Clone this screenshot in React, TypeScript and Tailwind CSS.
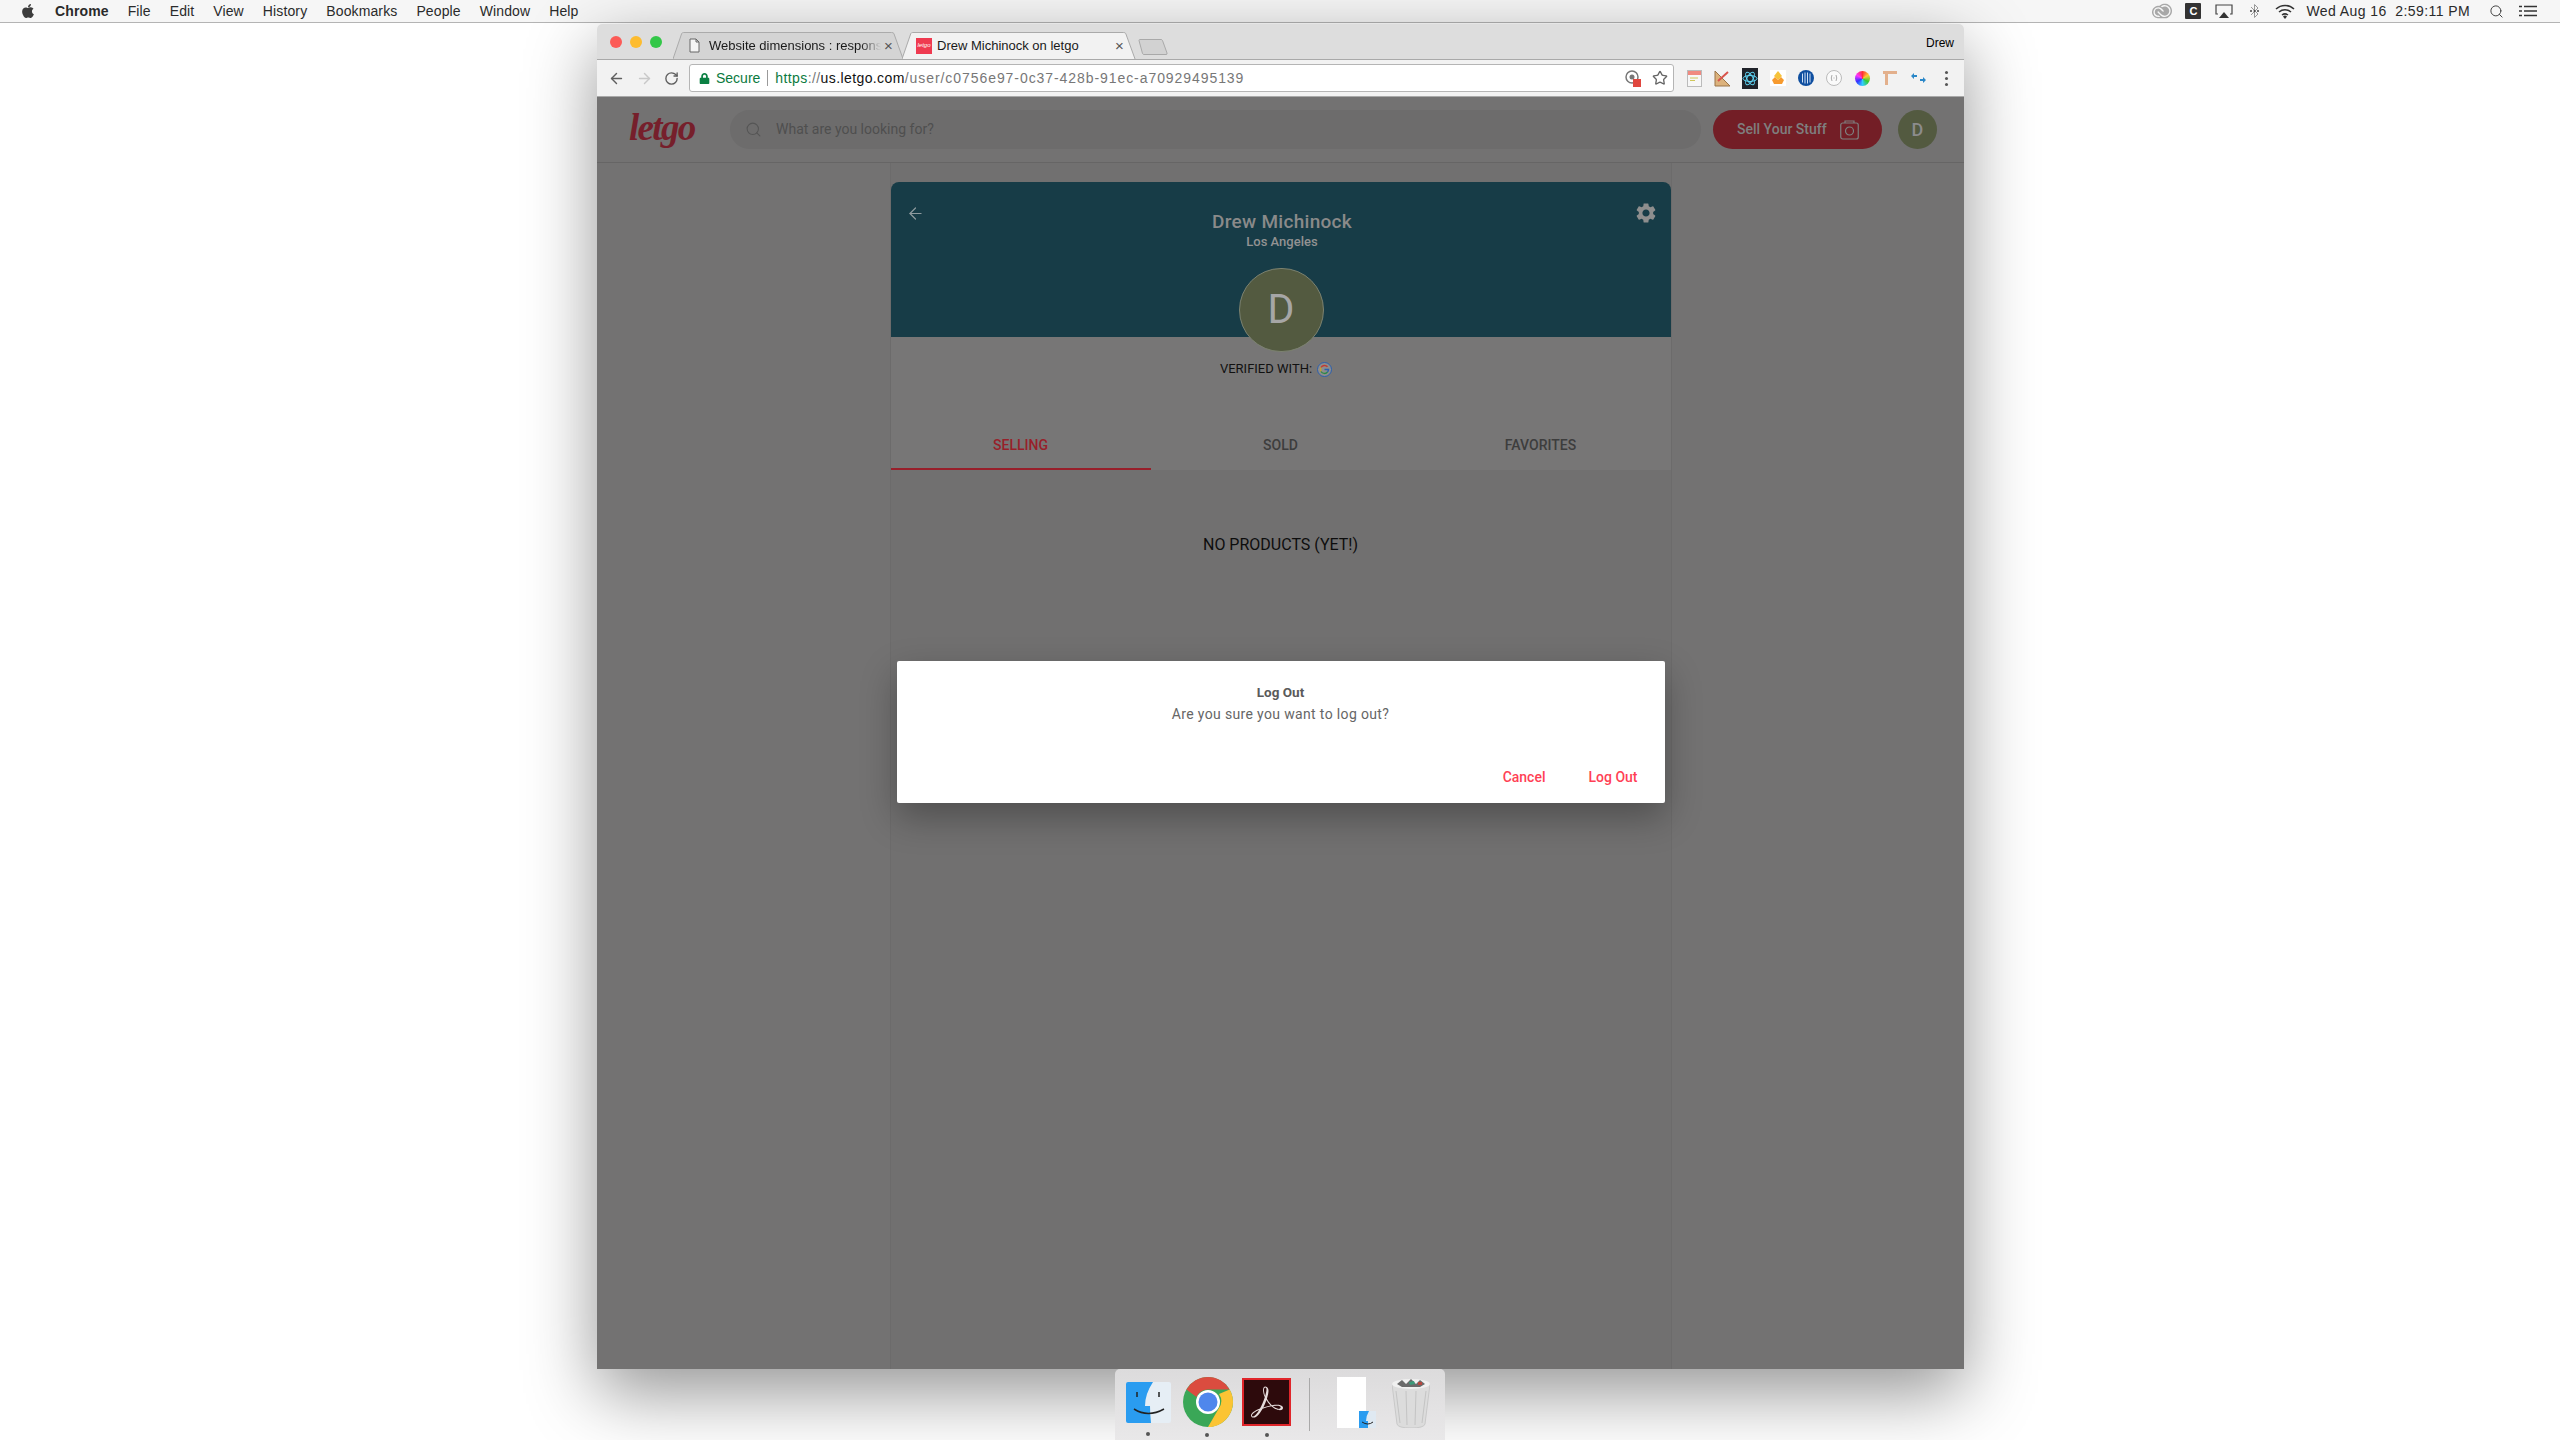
import { ArrowLeft, ArrowRight, RotateCw, Search, Star } from "lucide-react";
import { FaApple, FaLock } from "react-icons/fa";
import { MdSettings } from "react-icons/md";
import { SiAdobecreativecloud, SiAdobeacrobatreader } from "react-icons/si";

const menuItems = ["File", "Edit", "View", "History", "Bookmarks", "People", "Window", "Help"];

function MenuBar() {
  return (
    <div className="flex h-[23px] items-center justify-between bg-[#f6f6f6] border-b border-[#b4b4b4] pl-[20px] pr-[23px] font-['Liberation_Sans',sans-serif] text-[14px] text-[#2a2a2a]">
      <div className="flex items-center gap-[19px] tracking-[0.12px]">
        <FaApple className="size-[16px] text-[#3c3c3c]" />
        <span className="font-bold">Chrome</span>
        {menuItems.map((m) => (
          <span key={m}>{m}</span>
        ))}
      </div>
      <div className="flex items-center">
        <SiAdobecreativecloud className="size-[20px] text-[#a8a8a8]" />
        <div className="ml-[13px] flex size-[16px] items-center justify-center rounded-[1px] bg-[#333] text-[11px] font-bold text-white">C</div>
        <svg className="ml-[14px]" width="18" height="15" viewBox="0 0 18 15">
          <path d="M3 10H1V1h16v9h-2" fill="none" stroke="#444" strokeWidth="1.2" />
          <path d="M9 8l5 6H4z" fill="#333" />
        </svg>
        <svg className="ml-[16px]" width="11" height="16" viewBox="0 0 11 16">
          <path d="M2 4l7 7-3.5 3.5v-13L9 5 2 12" fill="none" stroke="#999" strokeWidth="1" />
          <circle cx="2" cy="8" r="1" fill="#444" />
          <circle cx="5.5" cy="8" r="1" fill="#444" />
          <circle cx="9" cy="8" r="1" fill="#444" />
        </svg>
        <svg className="ml-[15px]" width="20" height="15" viewBox="0 0 20 15">
          <path d="M1 5a13 13 0 0 1 18 0M4 8a9 9 0 0 1 12 0M7 11a5 5 0 0 1 6 0" fill="none" stroke="#333" strokeWidth="1.5" />
          <path d="M10 15l-2-2.500a3 3 0 0 1 4 0z" fill="#333" />
        </svg>
        <span className="ml-[11px] tracking-[0.42px] whitespace-pre">Wed Aug 16  2:59:11 PM</span>
        <Search className="ml-[19px] size-[15px] text-[#444]" strokeWidth={1.6} />
        <svg className="ml-[15px]" width="18" height="12" viewBox="0 0 18 12">
          <path d="M5 1.500h13M5 6h13M5 10.500h13" stroke="#333" strokeWidth="1.500" />
          <path d="M0 1.500h3M0 6h3M0 10.500h3" stroke="#333" strokeWidth="1.500" />
        </svg>
      </div>
    </div>
  );
}

function TabShape({ fill, stroke }: { fill: string; stroke: string }) {
  return (
    <svg className="absolute inset-0 h-full w-full" viewBox="0 0 240 27" preserveAspectRatio="none">
      <path d="M0 27L9 1.500Q9.500 0.500 11 0.500H226Q228 0.500 228.500 1.500L238 27" fill={fill} stroke={stroke} strokeWidth="1" />
    </svg>
  );
}

function TabStrip() {
  return (
    <div className="flex h-[36px] items-end bg-[#dddddd] border-b border-[#a9a9a9] pl-[13px] pr-[10px] font-['Liberation_Sans',sans-serif] text-[13px] text-[#1a1a1a]">
      <div className="mb-[11px] flex gap-[8px] self-end">
        <span className="size-[12px] rounded-full bg-[#fc5b57]" />
        <span className="size-[12px] rounded-full bg-[#fdbc2f]" />
        <span className="size-[12px] rounded-full bg-[#33c748]" />
      </div>
      <div className="relative ml-[11px] flex h-[27px] w-[232px] items-center pl-[16px]">
        <TabShape fill="#d4d4d4" stroke="#a9a9a9" />
        <svg className="relative" width="11" height="15" viewBox="0 0 11 15">
          <path d="M1 1h6l3 3v10H1zM7 1v3h3" fill="#f4f4f4" stroke="#666" strokeWidth="1" />
        </svg>
        <span className="relative ml-[9px] w-[172px] overflow-hidden whitespace-nowrap [mask-image:linear-gradient(to_right,black_88%,transparent)]">Website dimensions : responsive</span>
        <span className="relative ml-[3px] text-[15px] leading-none text-[#555]">×</span>
      </div>
      <div className="relative -ml-[3px] flex h-[27px] w-[235px] items-center pl-[14px]">
        <TabShape fill="#f2f2f2" stroke="#a9a9a9" />
        <span className="relative flex size-[16px] items-center justify-center bg-[#ef3a50] text-[6px] italic text-white">letgo</span>
        <span className="relative ml-[5px] w-[178px] whitespace-nowrap">Drew Michinock on letgo</span>
        <span className="relative text-[15px] leading-none text-[#555]">×</span>
      </div>
      <svg className="mb-[4px] ml-[1px]" width="30" height="16" viewBox="0 0 30 16">
        <path d="M1 1.500Q1 0.500 2 0.500H23Q24 0.500 24.500 1.500L29 14Q29.500 15.500 28 15.500H6Q5 15.500 4.500 14.500z" fill="#d2d2d2" stroke="#a9a9a9" />
      </svg>
      <span className="mb-[7px] ml-auto self-end text-[12px] text-black">Drew</span>
    </div>
  );
}

function ExtIcons() {
  return (
    <div className="ml-[6px] flex items-center">
      <span className="flex w-[28px] justify-center">
        <svg width="15" height="17" viewBox="0 0 15 17">
          <rect x="0.500" y="0.500" width="14" height="16" fill="#f7f7f7" stroke="#bbb" />
          <rect x="1" y="1" width="13" height="4" fill="#f08a80" />
          <path d="M3 8h8M3 10.500h5" stroke="#d0c75a" strokeWidth="1.200" />
        </svg>
      </span>
      <span className="flex w-[28px] justify-center">
        <svg width="17" height="17" viewBox="0 0 17 17">
          <path d="M1 1l0 15h15z" fill="#dcb27c" stroke="#9a7548" />
          <path d="M4 11l10-9" stroke="#d8534c" strokeWidth="2" />
        </svg>
      </span>
      <span className="flex w-[28px] justify-center">
        <svg width="16" height="21" viewBox="0 0 16 21">
          <rect width="16" height="21" fill="#20232a" />
          <g fill="none" stroke="#61dafb" strokeWidth="1">
            <ellipse cx="8" cy="10.500" rx="7" ry="3" />
            <ellipse cx="8" cy="10.500" rx="7" ry="3" transform="rotate(60 8 10.500)" />
            <ellipse cx="8" cy="10.500" rx="7" ry="3" transform="rotate(120 8 10.500)" />
          </g>
        </svg>
      </span>
      <span className="flex w-[28px] justify-center">
        <svg width="16" height="16" viewBox="0 0 16 16">
          <rect width="16" height="16" fill="#fff" />
          <path d="M8 1l4 5-4 4-4-4z" fill="#f6c33c" />
          <path d="M2 10l3-3 3 3 3-3 3 3-2 4H4z" fill="#f79a2e" />
        </svg>
      </span>
      <span className="flex w-[28px] justify-center">
        <svg width="16" height="16" viewBox="0 0 16 16">
          <circle cx="8" cy="8" r="8" fill="#0f4fa0" />
          <path d="M4.500 3.500v9M7 2.500v11M9.500 2.500v11M12 3.500v9" stroke="#cfe0f5" strokeWidth="1" />
        </svg>
      </span>
      <span className="flex w-[28px] justify-center">
        <svg width="16" height="16" viewBox="0 0 16 16">
          <circle cx="8" cy="8" r="7.500" fill="#fafafa" stroke="#bbb" />
          <path d="M6 5Q4.500 8 6 11M10 5q1.500 3 0 6M7.500 8h1" fill="none" stroke="#aaa" />
        </svg>
      </span>
      <span className="flex w-[28px] justify-center">
        <span className="size-[15px] rounded-full bg-[conic-gradient(#f33,#fc3,#3c3,#3cf,#33f,#f3f,#f33)]" />
      </span>
      <span className="flex w-[28px] justify-center">
        <svg width="16" height="16" viewBox="0 0 16 16">
          <path d="M1 1h14v3H6v11H3V4H1z" fill="#e3b08c" />
        </svg>
      </span>
      <span className="flex w-[28px] justify-center">
        <svg width="15" height="10" viewBox="0 0 15 10">
          <path d="M0 3l3-3v2h3v2H3v2zM15 7l-3-3v2H9v2h3v2z" fill="#2a87c8" />
        </svg>
      </span>
      <span className="ml-[9px] flex w-[10px] flex-col items-center gap-[3px]">
        <span className="size-[3px] rounded-full bg-[#555]" />
        <span className="size-[3px] rounded-full bg-[#555]" />
        <span className="size-[3px] rounded-full bg-[#555]" />
      </span>
    </div>
  );
}

function Toolbar() {
  return (
    <div className="flex h-[37px] items-center bg-[#f2f2f2] border-b border-[#a9a9a9] pl-[11px] font-['Liberation_Sans',sans-serif]">
      <ArrowLeft className="size-[17px] text-[#5f5f5f]" strokeWidth={2} />
      <ArrowRight className="ml-[11px] size-[17px] text-[#c8c8c8]" strokeWidth={2} />
      <RotateCw className="ml-[11px] size-[15px] text-[#5f5f5f]" strokeWidth={2.200} />
      <div className="ml-[10px] flex h-[28px] w-[985px] items-center rounded-[3px] border border-[#b5b5b5] bg-white pl-[9px] pr-[5px] text-[14px]">
        <FaLock className="size-[11px] text-[#0b8043]" />
        <span className="ml-[6px] text-[#0b7a3e]">Secure</span>
        <span className="ml-[7px] h-[16px] w-px bg-[#9a9a9a]" />
        <span className="ml-[7px] whitespace-nowrap">
          <span className="tracking-[0.4px] text-[#0b7a3e]">https</span>
          <span className="tracking-[0.4px] text-[#777]">://</span>
          <span className="tracking-[0.4px] text-[#111]">us.letgo.com</span>
          <span className="tracking-[0.93px] text-[#777]">/user/c0756e97-0c37-428b-91ec-a70929495139</span>
        </span>
        <svg className="ml-auto" width="16" height="18" viewBox="0 0 16 18">
          <circle cx="7" cy="8" r="6" fill="none" stroke="#777" strokeWidth="1.500" />
          <circle cx="7" cy="8" r="2.500" fill="#777" />
          <rect x="8" y="10" width="8" height="8" fill="#e0473f" />
        </svg>
        <Star className="ml-[11px] size-[16px] text-[#666]" strokeWidth={2} />
      </div>
      <ExtIcons />
    </div>
  );
}

function SiteHeader() {
  return (
    <div className="flex h-[66px] items-center border-b border-[#666565] bg-[#737272] pl-[32px] pr-[26px]">
      <span className="-mt-[4px] w-[64px] font-['Liberation_Serif',serif] text-[37px] leading-none font-bold italic tracking-[-1.700px] text-[#761f2b]">letgo</span>
      <div className="ml-[37px] flex h-[39px] w-[971px] items-center rounded-full bg-[#6d6c6c] pl-[15px] text-[14px] text-[#4f4f4f]">
        <Search className="size-[17px] text-[#555]" strokeWidth={1.500} />
        <span className="ml-[14px]">What are you looking for?</span>
      </div>
      <div className="ml-[12px] flex h-[39px] w-[169px] items-center rounded-full bg-[#731e26] pl-[24px] text-[14px] font-medium text-[#7f7f7f]">
        <span>Sell Your Stuff</span>
        <svg className="ml-[13px]" width="19" height="20" viewBox="0 0 19 20">
          <rect x="0.750" y="3" width="17.500" height="16" rx="2" fill="none" stroke="#7f7f7f" strokeWidth="1.200" />
          <circle cx="9.500" cy="11" r="4" fill="none" stroke="#7f7f7f" strokeWidth="1.200" />
          <path d="M5 3V1h9v2" fill="none" stroke="#7f7f7f" strokeWidth="1.200" />
        </svg>
      </div>
      <div className="ml-[16px] flex size-[39px] items-center justify-center rounded-full bg-[#535a40] text-[18px] font-medium text-[#8c8c8c]">D</div>
    </div>
  );
}

function GoogleIcon() {
  return (
    <svg width="15" height="15" viewBox="0 0 15 15">
      <circle cx="7.500" cy="7.500" r="7" fill="#8d8d8d" stroke="#2b5fae" strokeWidth="1" />
      <path d="M10.500 4.800A4 4 0 0 0 4 5.500" fill="none" stroke="#c23a30" strokeWidth="1.400" />
      <path d="M4 5.500a4 4 0 0 0 0 4" fill="none" stroke="#c9a028" strokeWidth="1.400" />
      <path d="M4 9.500a4 4 0 0 0 6.500.5" fill="none" stroke="#2a8a45" strokeWidth="1.400" />
      <path d="M7.500 7.500h4a4 4 0 0 1-1 2.500" fill="none" stroke="#2b5fae" strokeWidth="1.400" />
    </svg>
  );
}

function ProfileCard() {
  return (
    <div className="mt-[19px] w-[780px]">
      <div className="relative flex h-[155px] justify-between rounded-t-[8px] bg-[#173c47] pl-[15px] pr-[12px] pt-[22px]">
        <span className="w-[24px]">
          <ArrowLeft className="size-[19px] text-[#8e9a9e]" strokeWidth={1.500} />
        </span>
        <div className="flex flex-col items-center pt-[7px]">
          <span className="text-[19px] leading-[22px] font-medium tracking-[0.300px] text-[#8a8a8a]">Drew Michinock</span>
          <span className="text-[13px] leading-[18px] font-medium text-[#929292]">Los Angeles</span>
        </div>
        <MdSettings className="-mt-[3px] size-[24px] text-[#8e8e8e]" />
        <div className="absolute left-[348px] top-[86px] flex h-[84px] w-[85px] items-center justify-center rounded-full border border-[#7c8270] bg-[#535a40] text-[41px] font-normal text-[#a6a6a6]">D</div>
      </div>
      <div className="flex h-[133px] flex-col bg-[#777676]">
        <div className="mt-[24px] flex items-center justify-center gap-[5px] pr-[9px] text-[13px] leading-[16px] font-normal text-[#111]">
          <span>VERIFIED WITH:</span>
          <GoogleIcon />
        </div>
        <div className="mt-auto grid grid-cols-3 text-center text-[14px] font-medium">
          <div className="border-b-[2px] border-[#981f2a] pb-[14px] leading-[18px] text-[#981f2a]">SELLING</div>
          <div className="pb-[16px] leading-[18px] text-[#3d3d3d]">SOLD</div>
          <div className="pb-[16px] leading-[18px] text-[#3d3d3d]">FAVORITES</div>
        </div>
      </div>
      <div className="pt-[65px] text-center text-[16px] leading-[20px] text-[#0d0d0d]">NO PRODUCTS (YET!)</div>
    </div>
  );
}

function LogoutDialog() {
  return (
    <div className="absolute inset-0 flex items-center justify-center pb-[3px]">
      <div className="flex h-[142px] w-[768px] flex-col rounded-[2px] bg-white pt-[22px] shadow-[0_14px_36px_rgba(0,0,0,0.3)]">
        <div className="text-center text-[13.500px] leading-[18px] font-bold text-[#5a5a5a]">Log Out</div>
        <div className="mt-[4px] text-center text-[14px] leading-[18px] tracking-[0.350px] text-[#666]">Are you sure you want to log out?</div>
        <div className="mt-auto flex justify-end gap-[43px] pr-[27px] pb-[17px] text-[14px] leading-[18px] font-medium text-[#ff3f55]">
          <span>Cancel</span>
          <span>Log Out</span>
        </div>
      </div>
    </div>
  );
}

function Dock() {
  return (
    <div className="absolute bottom-0 left-[1115px] flex h-[71px] w-[330px] rounded-t-[5px] bg-gradient-to-b from-[#dcdbdc] to-[#e9e8e9] pl-[11px]">
      <div className="relative mt-[13px] h-[41px] w-[45px] shrink-0">
        <svg width="45" height="41" viewBox="0 0 45 41">
          <rect width="45" height="41" rx="2" fill="#e6eef5" />
          <path d="M2 0H27Q19 12 19 24H24Q24 32 25 41H2Q0 41 0 39V2Q0 0 2 0z" fill="#2a9cf0" />
          <path d="M11 10v5M33 10v5" stroke="#222" strokeWidth="1.500" />
          <path d="M8 27Q22 36 38 27" fill="none" stroke="#222" strokeWidth="1.500" />
        </svg>
        <span className="absolute -bottom-[13px] left-[20px] size-[4px] rounded-full bg-[#555]" />
      </div>
      <div className="relative ml-[12px] mt-[8px] h-[50px] w-[50px] shrink-0">
        <svg width="50" height="50" viewBox="0 0 50 50">
          <circle cx="25" cy="25" r="25" fill="#3aa757" />
          <path d="M25 0A25 25 0 0 1 46.650 12.500H25A12.500 12.500 0 0 0 13.500 20L3.400 12.500A25 25 0 0 1 25 0z" fill="#db4c3f" />
          <path d="M46.650 12.500A25 25 0 0 1 25 50L36 31A12.500 12.500 0 0 0 36 17z" fill="#fbc434" />
          <circle cx="25" cy="25" r="12" fill="#fff" />
          <circle cx="25" cy="25" r="9.500" fill="#4f87ec" />
        </svg>
        <span className="absolute -bottom-[10px] left-[22px] size-[4px] rounded-full bg-[#555]" />
      </div>
      <div className="relative ml-[9px] mt-[9px] flex h-[48px] w-[49px] shrink-0 items-center justify-center border-2 border-[#e0262b] bg-[#2d0a0c]">
        <SiAdobeacrobatreader className="size-[32px] text-[#e6dcdc]" />
        <span className="absolute -bottom-[13px] left-[21px] size-[4px] rounded-full bg-[#555]" />
      </div>
      <div className="ml-[18px] mt-[9px] h-[53px] w-px bg-[#a9a9a9]" />
      <div className="relative ml-[27px] mt-[8px] h-[51px] w-[29px] shrink-0 bg-white">
        <svg className="absolute -right-[10px] bottom-0" width="17" height="17" viewBox="0 0 17 17">
          <rect width="17" height="17" fill="#dfe9f2" />
          <path d="M0 0h10Q7 5 7 10h2v7H0z" fill="#2a9cf0" />
          <path d="M3 11Q9 15 14 11" fill="none" stroke="#222" />
        </svg>
      </div>
      <div className="ml-[26px] mt-[10px]">
        <svg width="38" height="49" viewBox="0 0 38 49">
          <path d="M0 5L5 45Q6 49 19 49T33 45L38 5z" fill="#dcdcdc" stroke="#c8c8c8" />
          <path d="M4 12L8 44M14 12l1 34M24 12l-1 34M34 12l-4 32" stroke="#c4c4c4" />
          <ellipse cx="19" cy="5" rx="19" ry="5" fill="#f0f0f0" />
          <path d="M5 5l5-4 4 4 5-5 5 5 4-4 5 4-5 3H10z" fill="#6a6a6a" />
          <path d="M17 3l5-1 1 3-5 1z" fill="#3c9a7a" />
          <path d="M26 3l4 0 0 3-4 0z" fill="#b5483f" />
        </svg>
      </div>
    </div>
  );
}

export default function App() {
  return (
    <div className="relative h-[1440px] w-[2560px] overflow-hidden bg-white">
      <MenuBar />
      <div className="flex justify-center pl-px pt-px">
        <div className="flex h-[1345px] w-[1367px] flex-col overflow-hidden rounded-t-[5px] shadow-[0_24px_70px_rgba(0,0,0,0.42)]">
          <TabStrip />
          <Toolbar />
          <div className="relative flex min-h-0 flex-1 flex-col bg-[#737272] font-['Roboto',sans-serif]">
            <SiteHeader />
            <div className="flex flex-1 justify-center">
              <div className="border-x border-[#6c6b6b] bg-[#717070]">
                <ProfileCard />
              </div>
            </div>
            <LogoutDialog />
          </div>
        </div>
      </div>
      <Dock />
    </div>
  );
}
